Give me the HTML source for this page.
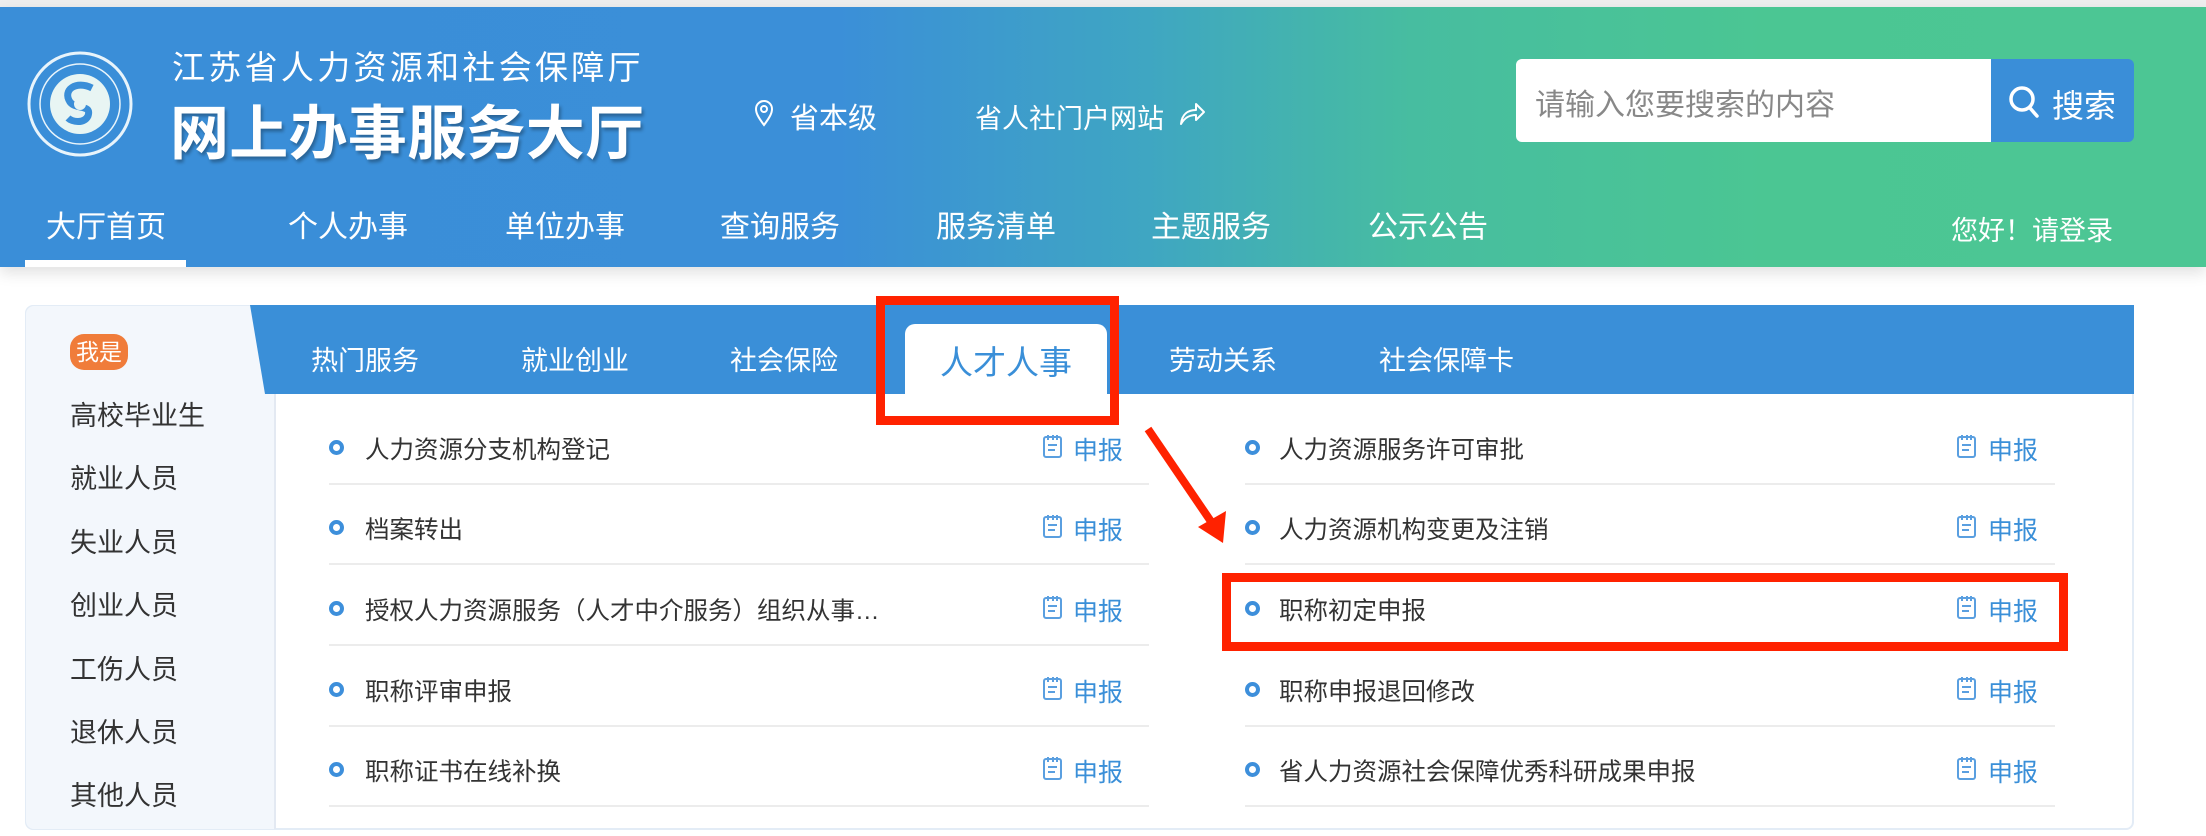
<!DOCTYPE html>
<html><head><meta charset="utf-8"><style>
*{margin:0;padding:0;box-sizing:border-box}
body{width:2206px;height:836px;background:#fff;position:relative;overflow:hidden;font-family:"Liberation Sans","Noto Sans CJK SC",sans-serif;color:#333}
.a{position:absolute;white-space:nowrap}
#hdr{position:absolute;left:0;top:7px;width:2206px;height:260px;background:linear-gradient(90deg,#3a8ed8 0%,#3b8fd8 38%,#3fa6c2 52%,#47bda0 64%,#4bc693 80%,#4cc694 100%);box-shadow:0 6px 14px rgba(0,0,0,.12)}
.w{color:#fff}
.nav{top:202px;font-size:30px;color:#fff}
.tab{top:339px;font-size:27px;color:#fff}
.side{left:70px;font-size:27px;color:#333}
.it{font-size:24.5px;color:#333}
.dot{position:absolute;width:15px;height:15px;border:4px solid #3d8fdb;border-radius:50%}
.sb{font-size:25px;color:#3a8fd8}
.ln{position:absolute;height:2px;background:#ececec}
</style></head><body>
<div class="a" style="left:0;top:0;width:2206px;height:7px;background:#eee"></div>
<div id="hdr"></div>
<svg class="a" style="left:26px;top:50px" width="108" height="108" viewBox="0 0 108 108">
<circle cx="54" cy="54" r="51" fill="none" stroke="#e8f4fb" stroke-width="3"/>
<circle cx="54" cy="54" r="40" fill="none" stroke="#e8f4fb" stroke-width="1.5"/>
<circle cx="54" cy="54" r="30" fill="#e8f5f3"/>
<path d="M66 38 C50 30 36 40 44 52 C50 60 66 54 62 66 C58 74 46 72 42 68" fill="none" stroke="#3a8ed8" stroke-width="7"/>
<circle cx="54" cy="54" r="6" fill="#e8f5f3"/>
</svg>
<div class="a w" style="left:172px;top:41px;font-size:33px;letter-spacing:3.3px">江苏省人力资源和社会保障厅</div>
<div class="a w" style="left:170px;top:86px;font-size:59px;letter-spacing:0.3px;font-weight:bold;text-shadow:2px 3px 3px rgba(0,0,0,.3)">网上办事服务大厅</div>
<svg class="a" style="left:754px;top:99px" width="20" height="28" viewBox="0 0 20 28"><path d="M10 26 C4 18 2 14 2 10 A8 8 0 0 1 18 10 C18 14 16 18 10 26Z" fill="none" stroke="#fff" stroke-width="2"/><circle cx="10" cy="10" r="3" fill="none" stroke="#fff" stroke-width="2"/></svg>
<div class="a w" style="left:790px;top:95px;font-size:29px">省本级</div>
<div class="a w" style="left:975px;top:97px;font-size:27px">省人社门户网站</div>
<svg class="a" style="left:1178px;top:100px" width="28" height="26" viewBox="0 0 28 26"><path d="M3 24 C4 14 10 10 18 10 L18 4 L26 12 L18 20 L18 15 C12 15 7 17 3 24Z" fill="none" stroke="#fff" stroke-width="2" stroke-linejoin="round"/></svg>
<div class="a" style="left:1516px;top:59px;width:476px;height:83px;background:#fff;border-radius:6px 0 0 6px"></div>
<div class="a" style="left:1535px;top:80px;font-size:30px;color:#888">请输入您要搜索的内容</div>
<div class="a" style="left:1991px;top:59px;width:143px;height:83px;background:#3a8ed8;border-radius:0 6px 6px 0"></div>
<svg class="a" style="left:2007px;top:84px" width="34" height="36" viewBox="0 0 34 36"><circle cx="15" cy="15" r="11" fill="none" stroke="#fff" stroke-width="3.5"/><path d="M23 24 L30 32" stroke="#fff" stroke-width="3.5" stroke-linecap="round"/></svg>
<div class="a w" style="left:2052px;top:81px;font-size:32px">搜索</div>
<div class="a nav" style="left:46px">大厅首页</div>
<div class="a" style="left:25px;top:260px;width:161px;height:7px;background:#fff"></div>
<div class="a nav" style="left:288px">个人办事</div>
<div class="a nav" style="left:505px">单位办事</div>
<div class="a nav" style="left:720px">查询服务</div>
<div class="a nav" style="left:936px">服务清单</div>
<div class="a nav" style="left:1151px">主题服务</div>
<div class="a nav" style="left:1368px">公示公告</div>
<div class="a w" style="left:1951px;top:209px;font-size:27px">您好！请登录</div>

<div class="a" style="left:25px;top:305px;width:2109px;height:525px;border:2px solid #e3ecf6;border-radius:8px;background:#fff"></div>
<div class="a" style="left:26px;top:306px;width:250px;height:523px;background:#f3f7fc;border-right:2px solid #e3e9f2;border-radius:8px 0 0 8px"></div>
<svg class="a" style="left:250px;top:305px" width="1884" height="89"><polygon points="0,0 1884,0 1884,89 15,89" fill="#3a8fd8"/></svg>
<div class="a" style="left:70px;top:334px;width:58px;height:36px;background:#f07c3a;border-radius:14px;color:#fff;font-size:23px;text-align:center;line-height:36px">我是</div>
<div class="a side" style="top:394px">高校毕业生</div>
<div class="a side" style="top:457px">就业人员</div>
<div class="a side" style="top:521px">失业人员</div>
<div class="a side" style="top:584px">创业人员</div>
<div class="a side" style="top:648px">工伤人员</div>
<div class="a side" style="top:711px">退休人员</div>
<div class="a side" style="top:774px">其他人员</div>

<div class="a tab" style="left:311px">热门服务</div>
<div class="a tab" style="left:521px">就业创业</div>
<div class="a tab" style="left:730px">社会保险</div>
<div class="a" style="left:905px;top:324px;width:202px;height:72px;background:#fff;border-radius:10px 10px 0 0"></div>
<div class="a" style="left:940px;top:336px;font-size:33px;color:#3a8fd8">人才人事</div>
<div class="a tab" style="left:1169px">劳动关系</div>
<div class="a tab" style="left:1379px">社会保障卡</div>

<div class="dot" style="left:329px;top:440px"></div><div class="a it" style="left:365px;top:431px">人力资源分支机构登记</div>
<div class="dot" style="left:329px;top:520px"></div><div class="a it" style="left:365px;top:511px">档案转出</div>
<div class="dot" style="left:329px;top:601px"></div><div class="a it" style="left:365px;top:592px">授权人力资源服务（人才中介服务）组织从事…</div>
<div class="dot" style="left:329px;top:682px"></div><div class="a it" style="left:365px;top:673px">职称评审申报</div>
<div class="dot" style="left:329px;top:762px"></div><div class="a it" style="left:365px;top:753px">职称证书在线补换</div>
<div class="dot" style="left:1245px;top:440px"></div><div class="a it" style="left:1279px;top:431px">人力资源服务许可审批</div>
<div class="dot" style="left:1245px;top:520px"></div><div class="a it" style="left:1279px;top:511px">人力资源机构变更及注销</div>
<div class="dot" style="left:1245px;top:601px"></div><div class="a it" style="left:1279px;top:592px">职称初定申报</div>
<div class="dot" style="left:1245px;top:682px"></div><div class="a it" style="left:1279px;top:673px">职称申报退回修改</div>
<div class="dot" style="left:1245px;top:762px"></div><div class="a it" style="left:1279px;top:753px">省人力资源社会保障优秀科研成果申报</div>

<div class="ln" style="left:329px;top:483px;width:820px"></div>
<div class="ln" style="left:329px;top:563px;width:820px"></div>
<div class="ln" style="left:329px;top:644px;width:820px"></div>
<div class="ln" style="left:329px;top:725px;width:820px"></div>
<div class="ln" style="left:329px;top:805px;width:820px"></div>
<div class="ln" style="left:1245px;top:483px;width:810px"></div>
<div class="ln" style="left:1245px;top:563px;width:810px"></div>
<div class="ln" style="left:1245px;top:644px;width:810px"></div>
<div class="ln" style="left:1245px;top:725px;width:810px"></div>
<div class="ln" style="left:1245px;top:805px;width:810px"></div>

<svg width="0" height="0" style="position:absolute"><defs><g id="ic"><rect x="2" y="3" width="17" height="20" rx="2" fill="none" stroke="#5a9fe0" stroke-width="2"/><path d="M6 1v5M11 1v5M15 1v5M6 11h9M6 16h7" stroke="#5a9fe0" stroke-width="2"/></g></defs></svg>
<svg class="a" style="left:1042px;top:434px" width="22" height="26"><use href="#ic"/></svg><div class="a sb" style="left:1073px;top:431px">申报</div>
<svg class="a" style="left:1042px;top:514px" width="22" height="26"><use href="#ic"/></svg><div class="a sb" style="left:1073px;top:511px">申报</div>
<svg class="a" style="left:1042px;top:595px" width="22" height="26"><use href="#ic"/></svg><div class="a sb" style="left:1073px;top:592px">申报</div>
<svg class="a" style="left:1042px;top:676px" width="22" height="26"><use href="#ic"/></svg><div class="a sb" style="left:1073px;top:673px">申报</div>
<svg class="a" style="left:1042px;top:756px" width="22" height="26"><use href="#ic"/></svg><div class="a sb" style="left:1073px;top:753px">申报</div>
<svg class="a" style="left:1956px;top:434px" width="22" height="26"><use href="#ic"/></svg><div class="a sb" style="left:1988px;top:431px">申报</div>
<svg class="a" style="left:1956px;top:514px" width="22" height="26"><use href="#ic"/></svg><div class="a sb" style="left:1988px;top:511px">申报</div>
<svg class="a" style="left:1956px;top:595px" width="22" height="26"><use href="#ic"/></svg><div class="a sb" style="left:1988px;top:592px">申报</div>
<svg class="a" style="left:1956px;top:676px" width="22" height="26"><use href="#ic"/></svg><div class="a sb" style="left:1988px;top:673px">申报</div>
<svg class="a" style="left:1956px;top:756px" width="22" height="26"><use href="#ic"/></svg><div class="a sb" style="left:1988px;top:753px">申报</div>

<div class="a" style="left:876px;top:296px;width:243px;height:129px;border:9px solid #ff2200"></div>
<div class="a" style="left:1222px;top:573px;width:846px;height:78px;border:9px solid #ff2200"></div>
<svg class="a" style="left:1140px;top:425px" width="100" height="125"><path d="M8 4 L72 98" stroke="#ff2200" stroke-width="8"/><polygon points="58,102 86,86 83,118" fill="#ff2200"/></svg>
</body></html>
